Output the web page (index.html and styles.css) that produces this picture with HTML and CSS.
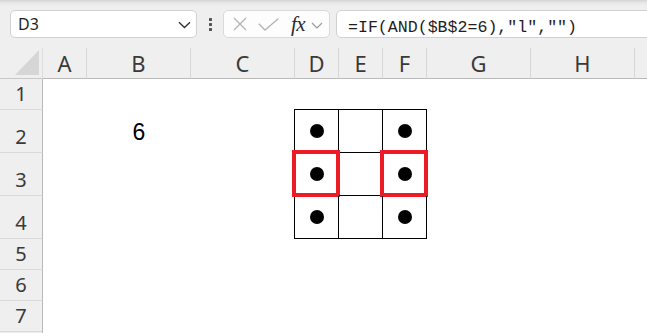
FILE: index.html
```html
<!DOCTYPE html>
<html>
<head>
<meta charset="utf-8">
<link rel="stylesheet" href="styles.css">
</head>
<body>
<div class="app">
  <div class="toolbar">
    <div class="namebox">
      <span class="ref">D3</span>
      <svg class="nb-chev" width="13" height="8" viewBox="0 0 13 8"><path d="M1 1.2 L6.5 6.5 L12 1.2" fill="none" stroke="#333" stroke-width="1.4"/></svg>
    </div>
    <div class="vdots"><i></i><i></i><i></i></div>
    <div class="fbtns">
      <svg class="ico-x" width="14" height="14" viewBox="0 0 14 14"><path d="M1 1 L13 13 M13 1 L1 13" stroke="#b3b3b3" stroke-width="1.3" fill="none"/></svg>
      <svg class="ico-check" width="21" height="13" viewBox="0 0 21 13"><path d="M0.8 5.8 L7 12 L20.2 0.8" stroke="#b3b3b3" stroke-width="1.3" fill="none"/></svg>
      <span class="fx">fx</span>
      <svg class="ico-chev" width="12" height="7" viewBox="0 0 12 7"><path d="M1 1 L6 6 L11 1" fill="none" stroke="#9a9a9a" stroke-width="1.2"/></svg>
    </div>
    <div class="formula">=IF(AND($B$2=6),"l","")</div>
  </div>

  <div class="sheet">
    <div class="table">
      <div class="tc"><span class="dot"></span></div>
      <div class="tc"></div>
      <div class="tc"><span class="dot"></span></div>
      <div class="tc"><span class="dot"></span><span class="hl"></span></div>
      <div class="tc"></div>
      <div class="tc"><span class="dot"></span><span class="hl"></span></div>
      <div class="tc"><span class="dot"></span></div>
      <div class="tc"></div>
      <div class="tc"><span class="dot"></span></div>
    </div>

    <div class="corner"><svg width="42" height="30" viewBox="0 0 42 30"><polygon points="39,2 39,27 15,27" fill="#d6d6d6"/></svg></div>
    <div class="ch">A</div><div class="ch">B</div><div class="ch">C</div><div class="ch">D</div><div class="ch">E</div><div class="ch">F</div><div class="ch">G</div><div class="ch">H</div><div class="ch last"></div>

    <div class="rh">1</div><div></div><div></div><div></div><div></div><div></div><div></div><div></div><div></div><div></div>
    <div class="rh">2</div><div></div><div class="val">6</div><div></div><div></div><div></div><div></div>
    <div class="rh">3</div><div></div><div></div><div></div><div></div><div></div><div></div>
    <div class="rh">4</div><div></div><div></div><div></div><div></div><div></div><div></div>
    <div class="rh">5</div><div></div><div></div><div></div><div></div><div></div><div></div><div></div><div></div><div></div>
    <div class="rh">6</div><div></div><div></div><div></div><div></div><div></div><div></div><div></div><div></div><div></div>
    <div class="rh">7</div><div></div><div></div><div></div><div></div><div></div><div></div><div></div><div></div><div></div>
    <div class="rh"></div><div></div><div></div><div></div><div></div><div></div><div></div><div></div><div></div><div></div>
  </div>
</div>
</body>
</html>
```

FILE: styles.css
```css
* { box-sizing: border-box; }
html, body { margin: 0; padding: 0; }
body {
  width: 647px;
  height: 333px;
  overflow: hidden;
  background: #ffffff;
  font-family: "Noto Sans", "Open Sans", sans-serif;
}
.app { width: 647px; height: 333px; overflow: hidden; }

.toolbar {
  height: 48px;
  display: flex;
  align-items: flex-start;
  padding: 10px 0 0 10px;
  background: linear-gradient(#d4d4d4 0px, #e8e8e8 3px, #efefef 6px, #efefef 100%);
}
.namebox {
  width: 187px;
  height: 28px;
  background: #fff;
  border: 1px solid #d2d2d2;
  border-radius: 5px;
  display: flex;
  align-items: center;
  justify-content: space-between;
  padding: 0 5px 0 7px;
}
.ref {
  font-size: 16px;
  line-height: 26px;
  color: #1e1e1e;
}
.nb-chev { margin-top: 1px; }
.vdots {
  margin-left: 12px;
  padding-top: 8px;
  display: flex;
  flex-direction: column;
  gap: 2px;
  width: 3px;
}
.vdots i {
  display: block;
  width: 3px;
  height: 3px;
  background: #555;
  border-radius: 0.5px;
}
.fbtns {
  margin-left: 11px;
  width: 107px;
  height: 28px;
  background: #fdfdfd;
  border: 1px solid #dadada;
  border-radius: 5px;
  display: flex;
  align-items: center;
  padding-left: 9px;
}
.ico-check { margin-left: 11px; }
.fx {
  margin-left: 12px;
  font-family: "Liberation Serif", "DejaVu Serif", serif;
  font-style: italic;
  font-size: 21px;
  line-height: 26px;
  color: #2b2b2b;
  letter-spacing: -0.5px;
}
.ico-chev { margin-left: 6px; margin-top: 2px; }
.formula {
  margin-left: 6px;
  flex: 1;
  margin-right: -12px;
  height: 28px;
  background: #fff;
  border: 1px solid #d2d2d2;
  border-radius: 5px;
  padding: 4px 0 0 11px;
  font-family: "Liberation Mono", "DejaVu Sans Mono", monospace;
  font-size: 16.6px;
  line-height: 25px;
  color: #1e1e1e;
  white-space: nowrap;
}

.sheet {
  display: grid;
  grid-template-columns: 43px 44px 104px 104px 44px 44px 44px 104px 104px 12px;
  grid-template-rows: 31px 31px 43px 43px 43px 31px 31px 31px 31px;
  background: #fff;
}
.corner {
  background: #efefef;
  border-right: 1px solid #dcdcdc;
  border-bottom: 1px solid #c8c8c8;
}
.corner svg { display: block; }
.ch {
  background: #efefef;
  border-right: 1px solid #d6d6d6;
  border-bottom: 1px solid #b9b9b9;
  display: flex;
  align-items: center;
  justify-content: center;
  font-size: 22px;
  line-height: 30px;
  color: #3a3a3a;
}
.ch.last { border-right: none; }
.rh {
  background: #efefef;
  border-right: 1px solid #b9b9b9;
  border-bottom: 1px solid #d9d9d9;
  display: flex;
  align-items: flex-end;
  justify-content: center;
  font-size: 20px;
  line-height: 30px;
  color: #3a3a3a;
}
.val {
  font-family: "Liberation Sans", Arial, sans-serif;
  font-size: 23px;
  line-height: 23px;
  padding-top: 11px;
  text-align: center;
  color: #000;
}

.table {
  grid-column: 5 / 8;
  grid-row: 3 / 6;
  margin: -1px 0 0 -1px;
  display: grid;
  grid-template-columns: 44px 44px 44px;
  grid-template-rows: 43px 43px 43px;
  border-left: 1px solid #000;
  border-top: 1px solid #000;
}
.tc {
  position: relative;
  border-right: 1px solid #000;
  border-bottom: 1px solid #000;
  display: flex;
  align-items: center;
  justify-content: center;
}
.dot {
  display: block;
  width: 14px;
  height: 14px;
  border-radius: 50%;
  background: #000;
}
.hl {
  position: absolute;
  left: -3px;
  top: -3px;
  width: 48px;
  height: 47px;
  border: 4px solid #ed1c24;
}
```
